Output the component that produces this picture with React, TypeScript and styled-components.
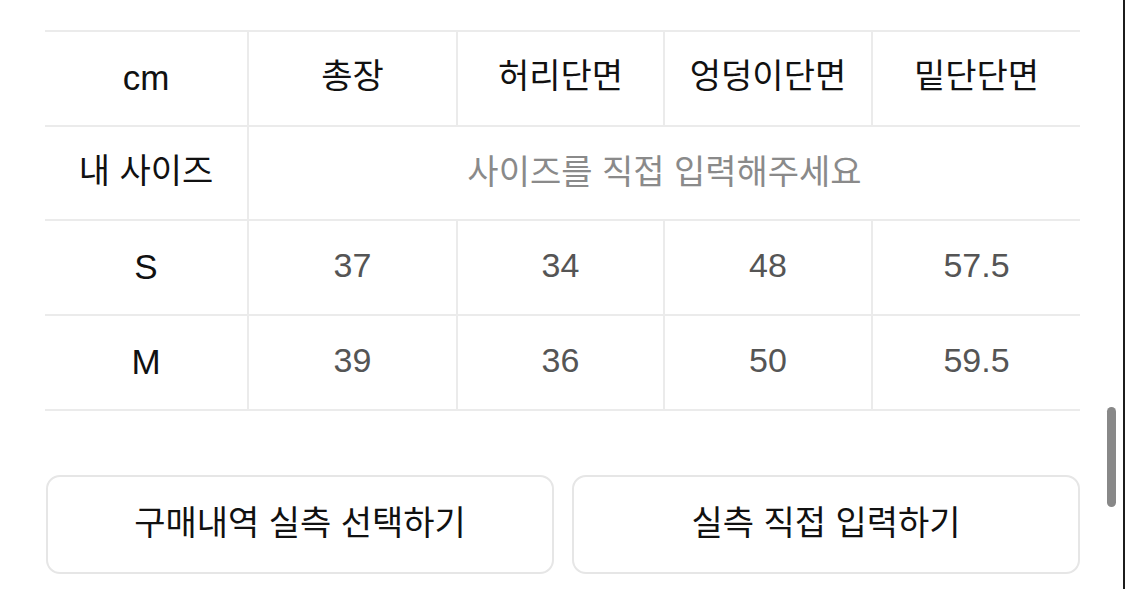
import React from "react";
import styled, { createGlobalStyle, css } from "styled-components";

const GlobalStyle = createGlobalStyle`
  html, body {
    margin: 0;
    padding: 0;
    background: #ffffff;
  }
  body {
    font-family: "Liberation Sans", "Noto Sans CJK KR", sans-serif;
    color: #111111;
  }
  * { box-sizing: border-box; }
`;

const Page = styled.div`
  position: relative;
  width: 1125px;
  height: 589px;
  padding: 30px 43px 0 45px;
  border-right: 2px solid #1c1c1c;
  display: flex;
  flex-direction: column;
  overflow: hidden;
`;

const SizeTable = styled.div`
  display: grid;
  grid-template-columns: 202px 209px 207px 208px 209px;
  border-top: 2px solid #ebebeb;
`;

type Tone = "head" | "label" | "value" | "hint";

const toneStyles: Record<Tone, ReturnType<typeof css>> = {
  head: css`
    font-size: 34px;
    font-weight: 400;
    color: #111111;
    padding-bottom: 10px;
  `,
  label: css`
    font-size: 35px;
    font-weight: 400;
    color: #111111;
    padding-bottom: 1px;
  `,
  value: css`
    font-size: 34px;
    font-weight: 400;
    color: #555555;
    padding-bottom: 4px;
  `,
  hint: css`
    font-size: 34px;
    font-weight: 400;
    color: #8a8a8a;
    padding-bottom: 8px;
  `,
};

const Cell = styled.div<{ $first?: boolean; $span?: number; $tone: Tone; $h?: number }>`
  height: ${(p) => p.$h ?? 95}px;
  display: flex;
  align-items: center;
  justify-content: center;
  border-bottom: 2px solid #ebebeb;
  border-left: ${(p) => (p.$first ? "none" : "2px solid #ebebeb")};
  grid-column: span ${(p) => p.$span ?? 1};
  white-space: nowrap;
  ${(p) => toneStyles[p.$tone]}
`;

const ButtonRow = styled.div`
  display: grid;
  grid-template-columns: 1fr 1fr;
  gap: 18px;
  margin-top: 64px;
  padding-left: 1px;
`;

const ActionButton = styled.button`
  height: 99px;
  border: 2px solid #e6e6e6;
  border-radius: 14px;
  background: #ffffff;
  font-family: "Liberation Sans", "Noto Sans CJK KR", sans-serif;
  font-size: 34px;
  font-weight: 400;
  color: #111111;
  display: flex;
  align-items: center;
  justify-content: center;
  padding: 0 0 8px;
`;

const ScrollThumb = styled.div`
  position: absolute;
  left: 1107px;
  top: 407px;
  width: 9px;
  height: 100px;
  border-radius: 5px;
  background: #888888;
`;

const headers = ["cm", "총장", "허리단면", "엉덩이단면", "밑단단면"];
const rows: { size: string; values: string[] }[] = [
  { size: "S", values: ["37", "34", "48", "57.5"] },
  { size: "M", values: ["39", "36", "50", "59.5"] },
];

export default function App() {
  return (
    <>
      <GlobalStyle />
      <Page>
        <SizeTable>
          {headers.map((h, i) => (
            <Cell key={h} $first={i === 0} $tone={i === 0 ? "label" : "head"}>
              {h}
            </Cell>
          ))}
          <Cell $first $tone="head" $h={94}>
            내 사이즈
          </Cell>
          <Cell $span={4} $tone="hint" $h={94}>
            사이즈를 직접 입력해주세요
          </Cell>
          {rows.map((r) => (
            <React.Fragment key={r.size}>
              <Cell $first $tone="label">
                {r.size}
              </Cell>
              {r.values.map((v, i) => (
                <Cell key={i} $tone="value">
                  {v}
                </Cell>
              ))}
            </React.Fragment>
          ))}
        </SizeTable>
        <ButtonRow>
          <ActionButton>구매내역 실측 선택하기</ActionButton>
          <ActionButton>실측 직접 입력하기</ActionButton>
        </ButtonRow>
        <ScrollThumb />
      </Page>
    </>
  );
}
